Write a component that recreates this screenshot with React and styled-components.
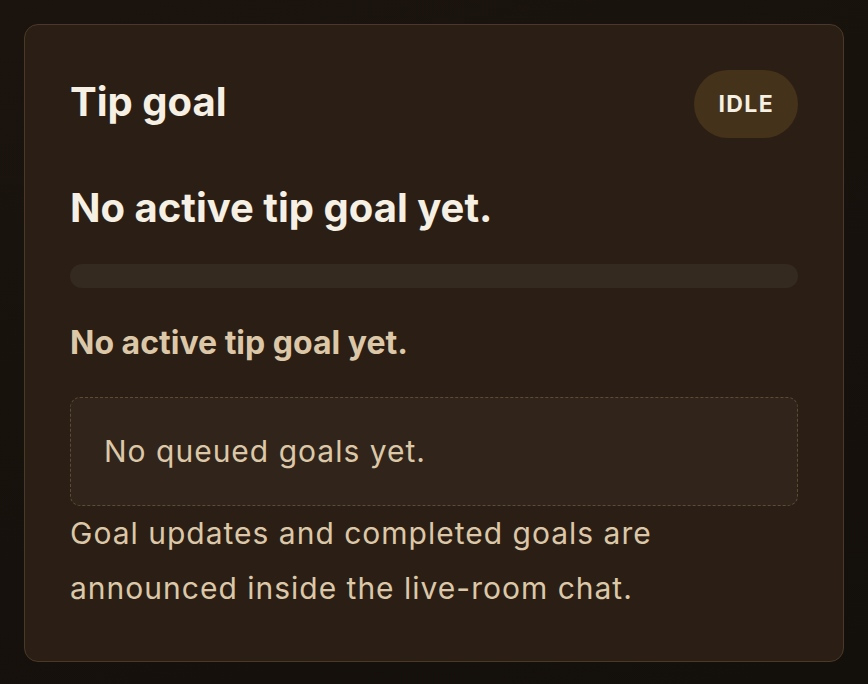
import styled, { createGlobalStyle } from "styled-components";

const GlobalStyle = createGlobalStyle`
  html, body {
    margin: 0;
    padding: 0;
  }
  body {
    min-height: 684px;
    background: linear-gradient(160deg, #1b140e 0%, #130f0b 100%);
    font-family: Inter, "Noto Sans", "Liberation Sans", sans-serif;
  }
`;

const Page = styled.div`
  padding: 24px;
  box-sizing: border-box;
  min-height: 684px;
`;

const Card = styled.section`
  box-sizing: border-box;
  border: 1px solid #4a3926;
  border-radius: 14px;
  background: #2b1f15;
  padding: 45px;
  display: flex;
  flex-direction: column;
`;

const Header = styled.div`
  display: flex;
  justify-content: space-between;
  align-items: flex-start;
  margin-bottom: 46px;
`;

const Title = styled.h2`
  margin: 0;
  padding-top: 8px;
  font-size: 40px;
  line-height: 48px;
  font-weight: 700;
  color: #f6efe3;
`;

const Badge = styled.span`
  display: inline-flex;
  align-items: center;
  justify-content: center;
  height: 68px;
  padding: 0 24px;
  border-radius: 999px;
  background: #45321a;
  color: #f6efe3;
  font-size: 23px;
  font-weight: 700;
  letter-spacing: 0.06em;
`;

const Headline = styled.h3`
  margin: 0 0 32px;
  font-size: 40px;
  line-height: 48px;
  font-weight: 700;
  color: #f6efe3;
`;

const Track = styled.div`
  height: 24px;
  border-radius: 999px;
  background: #352a20;
  overflow: hidden;
  margin-bottom: 32px;
`;

const Fill = styled.div`
  height: 100%;
  background: #c9953f;
`;

const Status = styled.p`
  margin: 0 0 32px;
  font-size: 32px;
  line-height: 45px;
  font-weight: 700;
  color: #dcc8a8;
`;

const Queue = styled.div`
  box-sizing: border-box;
  border: 1px dashed #5e4a35;
  border-radius: 10px;
  background: #31251b;
  padding: 26px 33px;
  font-size: 30px;
  line-height: 55px;
  letter-spacing: 1px;
  color: #dcc8a8;
`;

const Note = styled.p`
  margin: 0;
  font-size: 30px;
  line-height: 55px;
  letter-spacing: 1px;
  color: #dcc8a8;
`;

export default function App() {
  const progress = 0;
  return (
    <>
      <GlobalStyle />
      <Page>
        <Card>
          <Header>
            <Title>Tip goal</Title>
            <Badge>IDLE</Badge>
          </Header>
          <Headline>No active tip goal yet.</Headline>
          <Track>
            <Fill style={{ width: `${progress}%` }} />
          </Track>
          <Status>No active tip goal yet.</Status>
          <Queue>No queued goals yet.</Queue>
          <Note>
            Goal updates and completed goals are
            <br />
            announced inside the live-room chat.
          </Note>
        </Card>
      </Page>
    </>
  );
}
